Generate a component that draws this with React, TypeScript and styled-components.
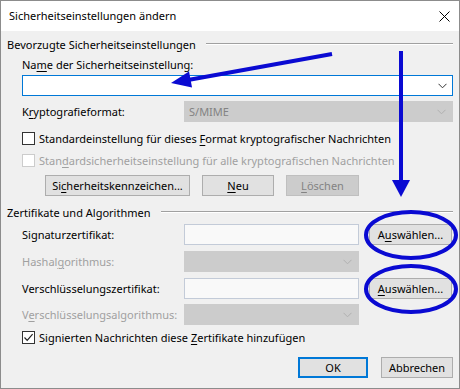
import React from "react";
import styled, { createGlobalStyle, css } from "styled-components";

const Global = createGlobalStyle`
  html, body { margin: 0; padding: 0; background: #f0f0f0; }
  * { box-sizing: border-box; }
`;

const FONT = `"Noto Sans", "Open Sans", sans-serif`;

const Window = styled.div`
  position: relative;
  width: 460px;
  height: 389px;
  border: 1px solid #8c8c8c;
  background: #f0f0f0;
  font-family: ${FONT};
  font-size: 11px;
  color: #000;
  display: flex;
  flex-direction: column;
  overflow: hidden;
`;

const TitleBar = styled.div`
  height: 30px;
  background: #fff;
  display: flex;
  align-items: center;
  justify-content: space-between;
  padding: 0 9px 0 8px;
  flex-shrink: 0;
`;

const Title = styled.span`
  font-size: 11px;
  line-height: 16px;
`;

const Body = styled.div`
  display: flex;
  flex-direction: column;
  padding: 0 6px;
`;

const Row = styled.div<{ $mt: number; $h: number; $indent?: number }>`
  display: flex;
  align-items: center;
  margin-top: ${(p) => p.$mt}px;
  height: ${(p) => p.$h}px;
  padding-left: ${(p) => p.$indent ?? 15}px;
`;

const GroupHeader = styled.div<{ $mt: number }>`
  display: flex;
  align-items: center;
  gap: 10px;
  height: 16px;
  margin-top: ${(p) => p.$mt}px;
  white-space: nowrap;
`;

const GroupLine = styled.div`
  flex: 1;
  height: 2px;
  border-top: 1px solid #a0a0a0;
  border-bottom: 1px solid #fff;
`;

const Label = styled.span<{ $disabled?: boolean; $w?: number }>`
  width: ${(p) => (p.$w ? `${p.$w}px` : "auto")};
  flex-shrink: 0;
  white-space: nowrap;
  color: ${(p) => (p.$disabled ? "#a0a0a0" : "#000")};
`;

const TextInput = styled.div<{ $focus?: boolean; $w?: number }>`
  height: 100%;
  width: ${(p) => (p.$w ? `${p.$w}px` : "auto")};
  flex: ${(p) => (p.$w ? "none" : "1")};
  display: flex;
  align-items: center;
  justify-content: flex-end;
  padding-right: 5px;
  ${(p) =>
    p.$focus
      ? css`
          background: #fff;
          border: 1px solid #0078d7;
        `
      : css`
          background: #f9f9f9;
          border: 1px solid #c3cbd8;
        `}
`;

const Combo = styled.div<{ $disabled?: boolean; $w?: number }>`
  height: 100%;
  width: ${(p) => (p.$w ? `${p.$w}px` : "auto")};
  flex: ${(p) => (p.$w ? "none" : "1")};
  display: flex;
  align-items: center;
  justify-content: space-between;
  padding: 0 6px 0 4px;
  background: ${(p) => (p.$disabled ? "#cccccc" : "#fff")};
  border: 1px solid ${(p) => (p.$disabled ? "#cccccc" : "#7a7a7a")};
  color: #838383;
`;

const Chevron = ({ color }: { color: string }) => (
  <svg width="9" height="6" viewBox="0 0 9 6">
    <path d="M0.5 0.8 L4.5 4.8 L8.5 0.8" fill="none" stroke={color} strokeWidth="1" />
  </svg>
);

const CheckRow = styled.label<{ $disabled?: boolean }>`
  display: flex;
  align-items: center;
  gap: 4px;
  white-space: nowrap;
  color: ${(p) => (p.$disabled ? "#a0a0a0" : "#000")};
`;

const Box = styled.span<{ $disabled?: boolean }>`
  width: 13px;
  height: 13px;
  border: 1px solid ${(p) => (p.$disabled ? "#cccccc" : "#333333")};
  background: #fff;
  display: flex;
  align-items: center;
  justify-content: center;
  flex-shrink: 0;
`;

const Button = styled.div<{ $w: number; $disabled?: boolean; $default?: boolean }>`
  width: ${(p) => p.$w}px;
  height: 21px;
  flex-shrink: 0;
  display: flex;
  align-items: center;
  justify-content: center;
  white-space: nowrap;
  background: ${(p) => (p.$disabled ? "#cccccc" : "#e1e1e1")};
  color: ${(p) => (p.$disabled ? "#838383" : "#000")};
  border: ${(p) =>
    p.$default ? "2px solid #0078d7" : `1px solid ${p.$disabled ? "#bfbfbf" : "#adadad"}`};
`;

const ButtonRow = styled(Row)<{ $gap: number; $end?: boolean }>`
  gap: ${(p) => p.$gap}px;
  justify-content: ${(p) => (p.$end ? "flex-end" : "flex-start")};
`;

const FieldRow = styled(Row)`
  gap: 10px;
`;

const Overlay = styled.svg`
  position: absolute;
  left: -1px;
  top: -1px;
  pointer-events: none;
`;

const U = styled.u`
  text-decoration-thickness: 1px;
  text-underline-offset: 2px;
`;

const CloseIcon = () => (
  <svg width="11" height="11" viewBox="0 0 11 11">
    <path d="M0.5 0.5 L10.5 10.5 M10.5 0.5 L0.5 10.5" stroke="#000" strokeWidth="1" />
  </svg>
);

const ANNOT = "#0a0ad2";

export default function App() {
  return (
    <>
      <Global />
      <Window>
        <TitleBar>
          <Title>Sicherheitseinstellungen ändern</Title>
          <CloseIcon />
        </TitleBar>
        <Body>
          <GroupHeader $mt={5}>
            Bevorzugte Sicherheitseinstellungen
            <GroupLine />
          </GroupHeader>
          <Row $mt={4} $h={16}>
            <Label>
              Na<U>m</U>e der Sicherheitseinstellung:
            </Label>
          </Row>
          <Row $mt={3} $h={21}>
            <TextInput $focus>
              <Chevron color="#333" />
            </TextInput>
          </Row>
          <Row $mt={5} $h={21}>
            <Label $w={162}>
              K<U>r</U>yptografieformat:
            </Label>
            <Combo $disabled>
              <span>S/MIME</span>
              <Chevron color="#b0b0b0" />
            </Combo>
          </Row>
          <Row $mt={8} $h={16}>
            <CheckRow>
              <Box />
              <span>
                Standardeinstellung für dieses <U>F</U>ormat kryptografischer Nachrichten
              </span>
            </CheckRow>
          </Row>
          <Row $mt={6} $h={16}>
            <CheckRow $disabled>
              <Box $disabled />
              <span>
                Stan<U>d</U>ardsicherheitseinstellung für alle kryptografischen Nachrichten
              </span>
            </CheckRow>
          </Row>
          <ButtonRow $mt={7} $h={21} $indent={38} $gap={12}>
            <Button $w={145}>
              Si<U>c</U>herheitskennzeichen...
            </Button>
            <Button $w={72}>
              <U>N</U>eu
            </Button>
            <Button $w={73} $disabled>
              <U>L</U>öschen
            </Button>
          </ButtonRow>
          <GroupHeader $mt={8}>
            Zertifikate und Algorithmen
            <GroupLine />
          </GroupHeader>
          <FieldRow $mt={4} $h={21}>
            <Label $w={152}>Signaturzertifikat:</Label>
            <TextInput $w={175} />
            <Button $w={83}>
              A<U>u</U>swählen...
            </Button>
          </FieldRow>
          <FieldRow $mt={6} $h={21}>
            <Label $w={152} $disabled>
              Hashal<U>g</U>orithmus:
            </Label>
            <Combo $disabled $w={175}>
              <span />
              <Chevron color="#b0b0b0" />
            </Combo>
          </FieldRow>
          <FieldRow $mt={6} $h={21}>
            <Label $w={152}>Verschlüsselungszertifikat:</Label>
            <TextInput $w={175} />
            <Button $w={83}>
              <U>A</U>uswählen...
            </Button>
          </FieldRow>
          <FieldRow $mt={5} $h={21}>
            <Label $w={152} $disabled>
              V<U>e</U>rschlüsselungsalgorithmus:
            </Label>
            <Combo $disabled $w={175}>
              <span />
              <Chevron color="#b0b0b0" />
            </Combo>
          </FieldRow>
          <Row $mt={4} $h={16}>
            <CheckRow>
              <Box>
                <svg width="11" height="11" viewBox="0 0 11 11">
                  <path d="M1.5 5.5 L4.2 8.3 L9.6 2.2" fill="none" stroke="#222" strokeWidth="1.2" />
                </svg>
              </Box>
              <span>
                Signierten Nachrichten diese <U>Z</U>ertifikate hinzufügen
              </span>
            </CheckRow>
          </Row>
          <ButtonRow $mt={12} $h={21} $gap={13} $end>
            <Button $w={70} $default>
              OK
            </Button>
            <Button $w={72}>Abbrechen</Button>
          </ButtonRow>
        </Body>
        <Overlay width="460" height="389" viewBox="0 0 460 389">
          <line x1="332" y1="54" x2="188" y2="80" stroke={ANNOT} strokeWidth="4" />
          <polygon points="171,83 192,87.5 189,71.5" fill={ANNOT} />
          <line x1="401" y1="51" x2="401" y2="182" stroke={ANNOT} strokeWidth="4" />
          <polygon points="392,180 410,180 401,197" fill={ANNOT} />
          <ellipse cx="411" cy="235" rx="45" ry="23" fill="none" stroke={ANNOT} strokeWidth="4" />
          <ellipse cx="411" cy="289" rx="45" ry="23" fill="none" stroke={ANNOT} strokeWidth="4" />
        </Overlay>
      </Window>
    </>
  );
}
